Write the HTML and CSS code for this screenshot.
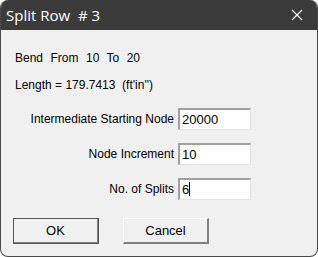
FILE: index.html
```html
<!DOCTYPE html>
<html>
<head>
  <meta charset="UTF-8">
  <title>Split Row # 3</title>
  <link rel="stylesheet" href="styles.css">
</head>
<body>
  <div class="window">
    <div class="titlebar">
      <span class="title">Split Row&nbsp; # 3</span>
      <svg class="close" width="12" height="12" viewBox="0 0 12 12">
        <path d="M1 1 L11 11 M11 1 L1 11" stroke="#fff" stroke-width="1.2" fill="none"/>
      </svg>
    </div>
    <div class="content">
      <p class="info bend">Bend&nbsp; From&nbsp; 10&nbsp; To&nbsp; 20</p>
      <p class="info">Length = 179.7413&nbsp; (ft'in'')</p>

      <!-- edit fields -->
      <div class="fields">
        <span class="label">Intermediate Starting Node</span>
        <div class="edit">20000</div>
        <span class="label">Node Increment</span>
        <div class="edit">10</div>
        <span class="label">No. of Splits</span>
        <div class="edit">6<span class="caret"></span></div>
      </div>

      <div class="buttons">
        <button class="btn default">OK</button>
        <button class="btn">Cancel</button>
      </div>
    </div>
  </div>
</body>
</html>
```

FILE: styles.css
```css
html, body {
  margin: 0;
  background: #ffffff;
}
body {
  font-family: "Liberation Sans", Arial, sans-serif;
  font-size: 12px;
  color: #000;
}
.window {
  width: 318px;
  height: 257px;
  box-sizing: border-box;
  border: 1px solid #4a4a4a;
  border-top: none;
  border-radius: 8px;
  overflow: hidden;
  background: #f0f0f0;
  display: flex;
  flex-direction: column;
}
.titlebar {
  height: 30px;
  background: #3b3b3b;
  display: flex;
  align-items: center;
  justify-content: space-between;
  padding: 0 14px 0 5px;
  color: #fff;
}
.title {
  font-family: "Open Sans", "Liberation Sans", sans-serif;
  font-size: 15px;
}
.content {
  padding: 20px 0 0 14px;
}
.info {
  margin: 0 0 11px 0;
  line-height: 16px;
}
.bend {
  word-spacing: 0.4px;
}
.fields {
  display: grid;
  grid-template-columns: 159px 73px;
  column-gap: 4px;
  row-gap: 13px;
  align-items: center;
  margin-top: 15px;
}
.label {
  text-align: right;
}
.edit {
  height: 22px;
  box-sizing: border-box;
  background: #fff;
  border-top: 2px solid #a0a0a0;
  border-left: 2px solid #a0a0a0;
  border-right: 1px solid #e3e3e3;
  border-bottom: 1px solid #e3e3e3;
  padding: 2px 0 0 2px;
  font-size: 13px;
  line-height: 16px;
}
.caret {
  display: inline-block;
  width: 1px;
  height: 14px;
  background: #000;
  vertical-align: -2px;
}
.buttons {
  display: flex;
  gap: 24px;
  margin: 18px 0 0 -2px;
}
.btn {
  width: 86px;
  height: 26px;
  font-family: "Liberation Sans", Arial, sans-serif;
  font-size: 13px;
  color: #000;
  background: #f0f0f0;
  border-top: 1px solid #ffffff;
  border-left: 1px solid #ffffff;
  border-right: 2px solid #808080;
  border-bottom: 2px solid #808080;
  padding: 0;
}
.btn.default {
  outline: 1px solid #555;
  outline-offset: -1px;
}
```
